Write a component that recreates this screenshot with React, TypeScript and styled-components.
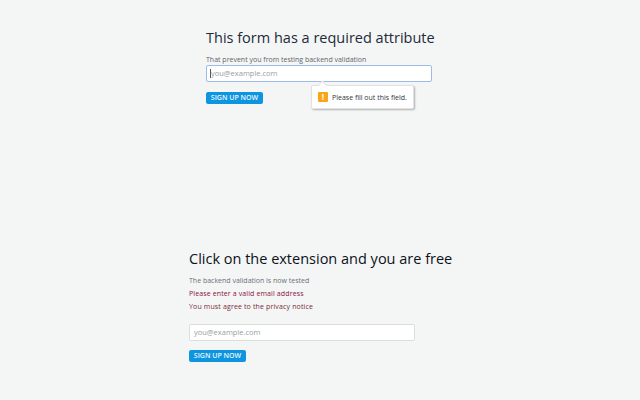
import React from 'react';
import styled, { createGlobalStyle } from 'styled-components';

const GlobalStyle = createGlobalStyle`
  html, body {
    margin: 0;
    padding: 0;
    width: 640px;
    height: 400px;
    overflow: hidden;
    background: #f4f6f6;
    font-family: 'Open Sans', 'Noto Sans', sans-serif;
  }
  * {
    box-sizing: border-box;
  }
`;

const Page = styled.div`
  width: 640px;
  height: 400px;
  display: flex;
  flex-direction: column;
`;

const TopSection = styled.section`
  height: 240px;
  padding: 27px 0 0 206px;
  display: flex;
  flex-direction: column;
  align-items: flex-start;
`;

const BottomSection = styled.section`
  padding: 8px 0 0 189px;
  display: flex;
  flex-direction: column;
  align-items: flex-start;
`;

const Title = styled.h1<{ $dark?: boolean }>`
  margin: 0;
  font-size: 14.5px;
  line-height: 22px;
  font-weight: 400;
  white-space: nowrap;
  color: ${(p) => (p.$dark ? '#0d1118' : '#232a38')};
`;

const Label = styled.div`
  margin-top: 5px;
  font-size: 7px;
  line-height: 11px;
  color: #5f646b;
  white-space: nowrap;
`;

const Field = styled.div`
  position: relative;
  width: 226px;
`;

const Input = styled.div<{ $focused?: boolean }>`
  width: 226px;
  height: 17px;
  background: #fff;
  border: 1px solid ${(p) => (p.$focused ? '#9dbbea' : '#dcdedb')};
  border-radius: 2px;
  padding-left: ${(p) => (p.$focused ? '3px' : '4px')};
  font-size: 7.5px;
  line-height: 15px;
  color: #9a9ea3;
  white-space: nowrap;
`;

const Caret = styled.span`
  display: inline-block;
  width: 1px;
  height: 9px;
  background: #555;
  vertical-align: -2px;
`;

const SubmitButton = styled.button`
  display: block;
  width: 57px;
  height: 12px;
  padding: 0;
  border: 0;
  border-radius: 2px;
  background: #0d95e0;
  color: #eaf6fd;
  font-family: inherit;
  font-size: 7px;
  font-weight: 600;
  line-height: 12px;
  text-align: center;
  white-space: nowrap;
`;

const TopSubmit = styled(SubmitButton)`
  margin-top: 10px;
`;

const BottomSubmit = styled(SubmitButton)`
  margin-top: 9px;
`;

const Bubble = styled.div`
  position: absolute;
  top: 20px;
  left: 105px;
  width: 103px;
  height: 24px;
  padding-left: 6px;
  display: flex;
  align-items: center;
  gap: 4px;
  background: #fff;
  border: 1px solid #e2e2e2;
  border-radius: 2px;
  box-shadow: 1px 1px 2px rgba(0, 0, 0, 0.28);
  font-size: 7px;
  color: #303540;
  white-space: nowrap;

  &::before {
    content: '';
    position: absolute;
    top: -4px;
    left: 7px;
    width: 6px;
    height: 6px;
    background: #fff;
    border-left: 1px solid #e2e2e2;
    border-top: 1px solid #e2e2e2;
    transform: rotate(45deg);
  }
`;

const WarnIcon = styled.span`
  width: 10px;
  height: 10px;
  flex: none;
  border-radius: 1px;
  background: #f9a51a;
  color: #fff;
  font-size: 8px;
  font-weight: 700;
  line-height: 10px;
  text-align: center;
`;

const Messages = styled.div`
  margin-top: 5px;
  display: flex;
  flex-direction: column;
  gap: 2px;
`;

const Message = styled.div<{ $color: string; $spacing?: string }>`
  font-size: 7px;
  line-height: 11px;
  letter-spacing: ${(p) => p.$spacing || '0'};
  color: ${(p) => p.$color};
  white-space: nowrap;
`;

const BottomInput = styled(Input)`
  margin-top: 12px;
`;

export default function App() {
  return (
    <Page>
      <GlobalStyle />
      <TopSection>
        <Title>This form has a required attribute</Title>
        <Label>That prevent you from testing backend validation</Label>
        <Field>
          <Input $focused>
            <Caret />
            you@example.com
          </Input>
          <Bubble>
            <WarnIcon>!</WarnIcon>
            Please fill out this field.
          </Bubble>
        </Field>
        <TopSubmit>SIGN UP NOW</TopSubmit>
      </TopSection>
      <BottomSection>
        <Title $dark>Click on the extension and you are free</Title>
        <Messages>
          <Message $color="#6a6f76">The backend validation is now tested</Message>
          <Message $color="#8a0f3c" $spacing="0.12px">
            Please enter a valid email address
          </Message>
          <Message $color="#7a2a3a" $spacing="0.14px">
            You must agree to the privacy notice
          </Message>
        </Messages>
        <BottomInput>you@example.com</BottomInput>
        <BottomSubmit>SIGN UP NOW</BottomSubmit>
      </BottomSection>
    </Page>
  );
}
